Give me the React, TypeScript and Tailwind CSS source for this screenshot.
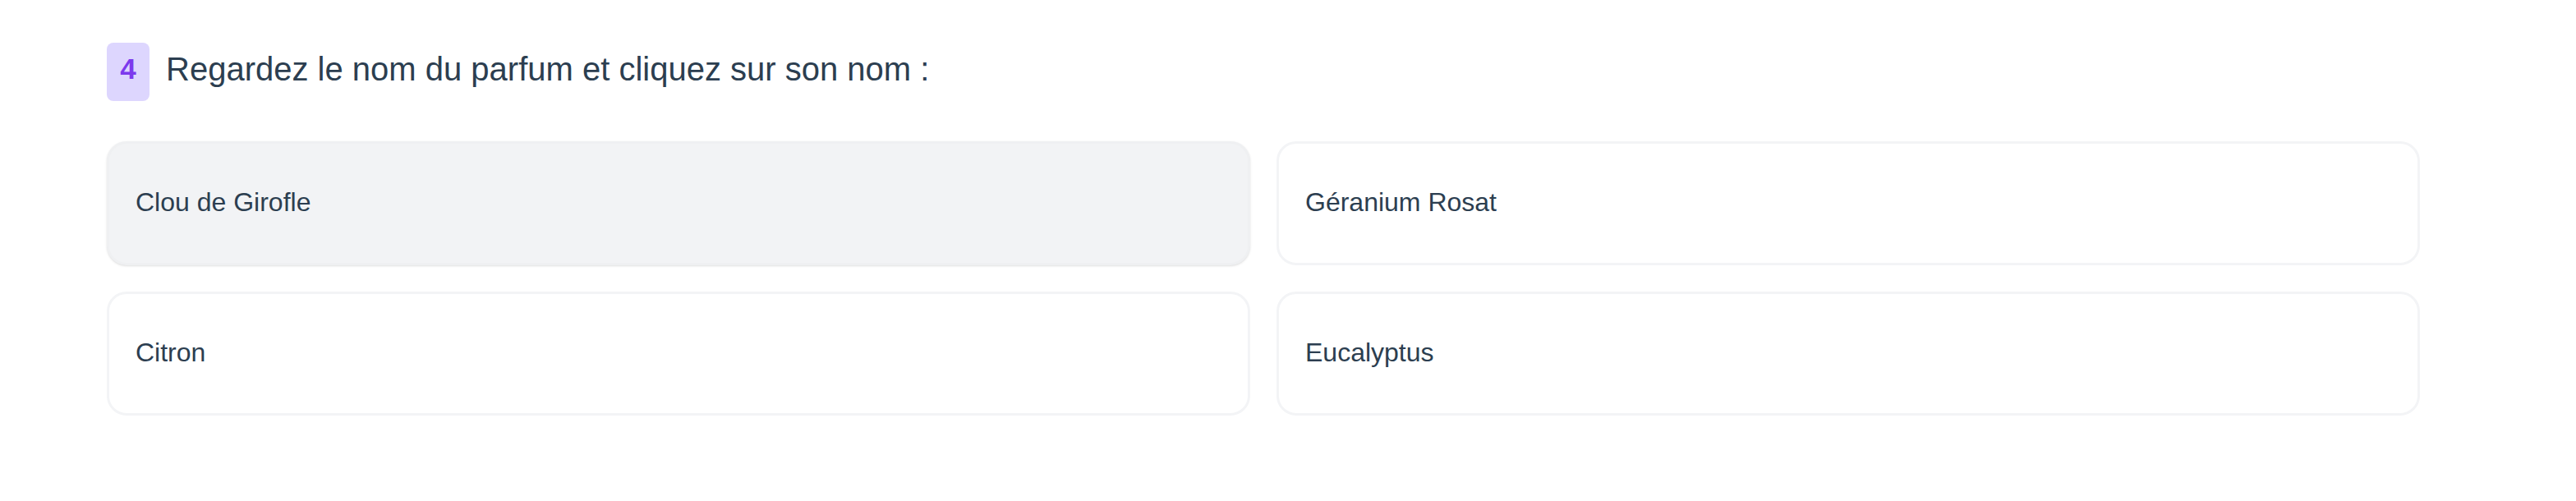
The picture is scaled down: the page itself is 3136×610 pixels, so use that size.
import React from 'react'

const options = ['Clou de Girofle', 'Géranium Rosat', 'Citron', 'Eucalyptus']

export default function App() {
  const selected = 0

  return (
    <div className="min-h-screen bg-white pl-[130px] pt-[52px]" style={{ fontFamily: '"Liberation Sans", Arial, sans-serif' }}>
      <div className="w-[2816px]">
        {/* Question header */}
        <div className="flex items-start gap-5">
          <div className="w-[52px] h-[71px] rounded-lg bg-[#ddd6fe] text-[#7c3aed] text-[35px] font-bold leading-[64px] text-center">
            4
          </div>
          <h2 className="text-[40px] leading-[64px] text-[#2c3e50]">
            Regardez le nom du parfum et cliquez sur son nom :
          </h2>
        </div>

        {/* Answer options */}
        <div className="grid grid-cols-2 gap-8 mt-[49px]">
          {options.map((opt, i) => (
            <button
              key={opt}
              className={`h-[151px] flex items-center px-8 pb-1 rounded-3xl border-[3px] text-left text-[32px] text-[#2c3e50] ${
                i === selected ? 'bg-[#f2f3f5] border-[#eff0f2] shadow-sm' : 'bg-white border-[#f3f4f6]'
              }`}
            >
              {opt}
            </button>
          ))}
        </div>
      </div>
    </div>
  )
}
